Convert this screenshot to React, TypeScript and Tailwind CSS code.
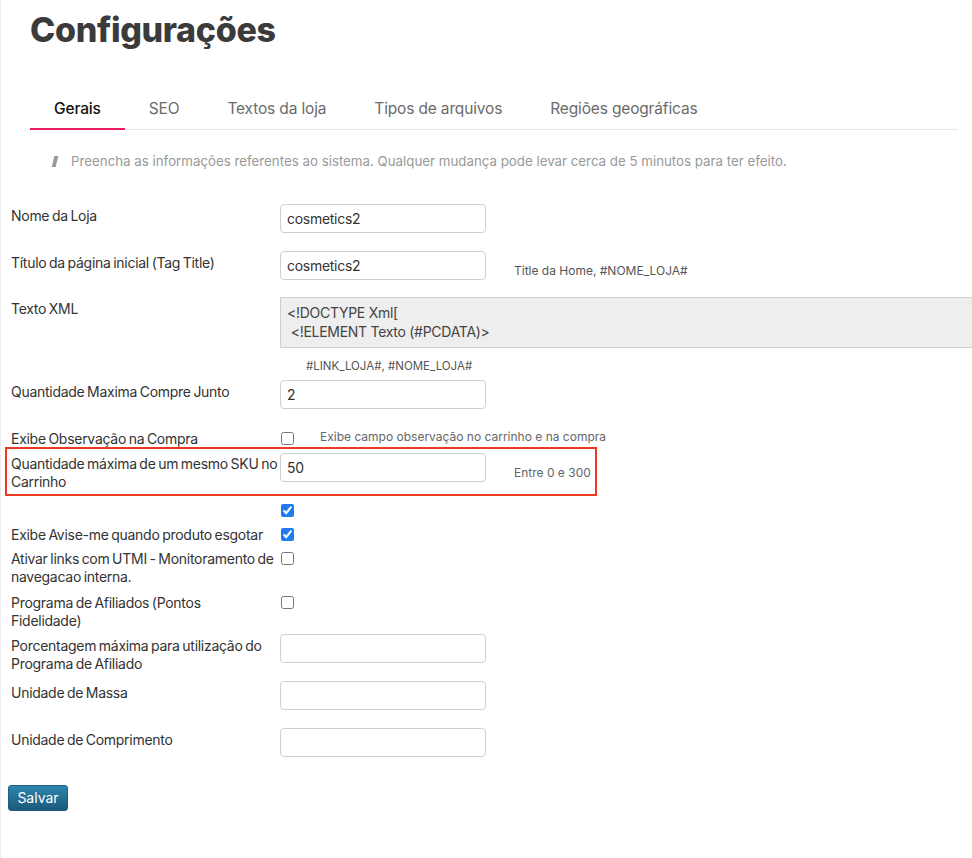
import React from "react";

const font = { fontFamily: "Inter, 'Noto Sans', sans-serif" };

function Label({ children, pt = "pt-[3px]" }: { children: React.ReactNode; pt?: string }) {
  return (
    <div className={`w-[269px] shrink-0 whitespace-nowrap text-[14px] leading-[18px] tracking-[-0.02em] [word-spacing:-1px] text-[#333] ${pt}`}>
      {children}
    </div>
  );
}

function TextInput({ value = "" }: { value?: string }) {
  return (
    <input
      readOnly
      defaultValue={value}
      className="w-[206px] h-[29px] shrink-0 rounded-[4px] border border-[#cfcfcf] bg-white px-[6px] text-[14px] tracking-[-0.02em] text-[#333] outline-none"
    />
  );
}

function Check({ checked = false }: { checked?: boolean }) {
  return (
    <input
      type="checkbox"
      readOnly
      defaultChecked={checked}
      className="m-0 ml-[1px] mt-[3px] h-[13px] w-[13px] shrink-0 accent-[#1f7bf2]"
    />
  );
}

export default function App() {
  const tabs = ["Gerais", "SEO", "Textos da loja", "Tipos de arquivos", "Regiões geográficas"];
  return (
    <div className="min-h-[858px] w-[972px] overflow-hidden bg-white shadow-[inset_1px_0_0_#ececec]" style={font}>
      <h1 className="pl-[30px] pt-[8px] text-[34px] font-extrabold leading-[44px] text-[#3b3b3b] tracking-[-0.01em]">
        Configurações
      </h1>
      <div className="ml-[30px] mr-[14px] mt-[44px] flex border-b border-[#e6e6e6]">
        {tabs.map((t, i) => (
          <div
            key={t}
            className={`px-6 pb-[7px] pt-[1px] text-[15.5px] leading-[24px] tracking-[-0.01em] ${
              i === 0
                ? "-mb-[1px] border-b-[2px] border-[#ec1a63] font-medium text-[#111]"
                : "text-[#6b6b6b]"
            }`}
          >
            {t}
          </div>
        ))}
      </div>
      <div className="mt-[22px] flex items-center pl-[52px] text-[13.3px] text-[#999]">
        <span className="ml-[1px] mr-[14px] inline-block h-[11px] w-[4px] skew-x-[-14deg] bg-[#9a9a9a]" />
        <span>Preencha as informações referentes ao sistema. Qualquer mudança pode levar cerca de 5 minutos para ter efeito.</span>
      </div>

      <div className="mt-[32px] pl-[11px]">
        {/* Nome da Loja */}
        <div className="flex h-[47px] items-start">
          <Label>Nome da Loja</Label>
          <TextInput value="cosmetics2" />
        </div>
        {/* Titulo */}
        <div className="flex h-[46px] items-start">
          <Label>Título da página inicial (Tag Title)</Label>
          <TextInput value="cosmetics2" />
          <span className="ml-[28px] mt-[12px] text-[12px] leading-[16px] text-[#555]">Title da Home, #NOME_LOJA#</span>
        </div>
        {/* Texto XML */}
        <div className="flex h-[61px] items-start">
          <Label>Texto XML</Label>
          <textarea
            readOnly
            defaultValue={"<!DOCTYPE Xml[\n <!ELEMENT Texto (#PCDATA)>"}
            className="h-[51px] w-[720px] shrink-0 resize-none overflow-hidden border border-[#cfcfcf] bg-[#eeeeee] px-[6px] pt-[5px] text-[14px] leading-[19px] tracking-[-0.02em] text-[#444] outline-none"
          />
        </div>
        <div className="flex h-[22px] items-start">
          <div className="w-[295px] shrink-0" />
          <span className="text-[11.5px] leading-[16px] text-[#555]">#LINK_LOJA#, #NOME_LOJA#</span>
        </div>
        {/* Quantidade Maxima */}
        <div className="flex h-[49px] items-start">
          <Label>Quantidade Maxima Compre Junto</Label>
          <TextInput value="2" />
        </div>
        {/* Exibe Observacao */}
        <div className="flex h-[18px] items-start">
          <Label pt="pt-[1px]">Exibe Observação na Compra</Label>
          <Check />
          <span className="ml-[26px] text-[12px] leading-[16px] text-[#666]">
            Exibe campo observação no carrinho e na compra
          </span>
        </div>
        {/* Red box */}
        <div className="-ml-[6px] flex h-[49px] w-[592px] items-start border-2 border-[#ee3a22] pl-[4px] pt-[4px]">
          <Label pt="pt-[2px]">
            Quantidade máxima de um mesmo SKU no
            <br />
            Carrinho
          </Label>
          <TextInput value="50" />
          <span className="ml-[28px] mt-[12px] text-[12px] leading-[16px] text-[#666]">Entre 0 e 300</span>
        </div>
        {/* checkbox alone */}
        <div className="mt-[5px] flex h-[24px] items-start">
          <Label pt="">&nbsp;</Label>
          <Check checked />
        </div>
        {/* Exibe Avise */}
        <div className="flex h-[24px] items-start">
          <Label pt="pt-[1px]">Exibe Avise-me quando produto esgotar</Label>
          <Check checked />
        </div>
        {/* Ativar links */}
        <div className="flex h-[44px] items-start">
          <Label pt="pt-[1px]">
            Ativar links com UTMI - Monitoramento de
            <br />
            navegacao interna.
          </Label>
          <Check />
        </div>
        {/* Programa */}
        <div className="flex h-[41px] items-start">
          <Label pt="pt-[1px]">
            Programa de Afiliados (Pontos
            <br />
            Fidelidade)
          </Label>
          <Check />
        </div>
        {/* Porcentagem */}
        <div className="flex h-[47px] items-start">
          <Label>
            Porcentagem máxima para utilização do
            <br />
            Programa de Afiliado
          </Label>
          <TextInput />
        </div>
        <div className="flex h-[47px] items-start">
          <Label>Unidade de Massa</Label>
          <TextInput />
        </div>
        <div className="flex h-[57px] items-start">
          <Label>Unidade de Comprimento</Label>
          <TextInput />
        </div>
      </div>
      <div className="pl-[8px]">
        <button className="h-[26px] w-[60px] rounded-[3px] border border-[#1d5f80] bg-gradient-to-b from-[#2f86ad] to-[#1b5a7b] text-[14px] text-white">
          Salvar
        </button>
      </div>
    </div>
  );
}
